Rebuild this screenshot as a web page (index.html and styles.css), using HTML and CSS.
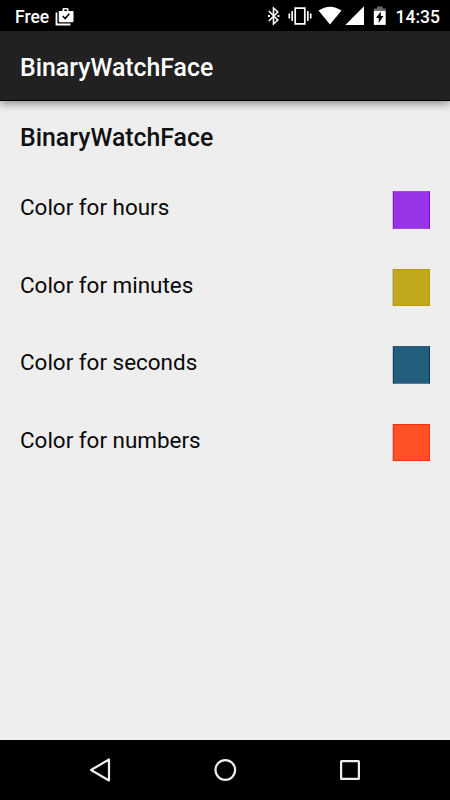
FILE: index.html
```html
<!DOCTYPE html>
<html lang="en">
<head>
<meta charset="utf-8">
<title>BinaryWatchFace</title>
<link rel="stylesheet" href="styles.css">
</head>
<body>
<div class="screen">
  <div class="status">
    <span class="carrier">Free</span>
    <svg class="work" width="20" height="20" viewBox="0 0 20 20"><path d="M1.5 5.500V17.500H15.500" fill="none" stroke="#fff" stroke-width="1.800"/><path fill="#fff" fill-rule="evenodd" d="M3.800 4H7.500V2.300Q7.500 1 8.800 1H12.200Q13.500 1 13.500 2.300V4H18.500V14Q18.500 15.300 17.200 15.300H5.100Q3.800 15.300 3.800 14ZM9.200 4H12V2.500H9.200Z"/><path d="M7.800 9L10.200 11.500L14.300 6.800" fill="none" stroke="#000" stroke-width="1.600"/></svg>
    <svg class="bluetooth" width="14" height="20" viewBox="0 0 14 20"><path d="M1.800 5L10.800 14L6.500 18V2L10.800 6L1.800 15" fill="none" stroke="#fff" stroke-width="1.600"/><path d="M1 9.100H2.900V10.900H1ZM10.500 9.100H12.400V10.900H10.500Z" fill="#fff"/></svg>
    <svg class="vibrate" width="24" height="20" viewBox="0 0 24 20"><path d="M7.200 2.200H16.800V17.800H7.200ZM4.200 5V15M1.300 7.500V12.500M19.800 5V15M22.700 7.500V12.500" fill="none" stroke="#fff" stroke-width="1.700"/></svg>
    <svg class="wifi" width="24" height="20" viewBox="0 0 24 20"><path d="M.5 4.500Q12-3.200 23.500 4.500L12 18.500Z" fill="#fff"/></svg>
    <svg class="signal" width="20" height="20" viewBox="0 0 20 20"><path d="M.3 19L19 .3V19Z" fill="#fff"/></svg>
    <svg class="battery" width="14" height="20" viewBox="0 0 14 20"><path d="M.8 5V2.500H4V.5H9.500V2.500H12.700V5Z" fill="#6a6a6a"/><path d="M.8 5H12.700V18.900H.8Z" fill="#fff"/><path d="M7.800 5.500V10H10.500L5.700 17V12H3Z" fill="#000"/></svg>
    <span class="clock">14:35</span>
  </div>
  <header class="appbar">BinaryWatchFace</header>
  <main class="content">
    <h1 class="category">BinaryWatchFace</h1>
    <div class="row"><span>Color for hours</span><i class="swatch hours"></i></div>
    <div class="row"><span>Color for minutes</span><i class="swatch minutes"></i></div>
    <div class="row"><span>Color for seconds</span><i class="swatch seconds"></i></div>
    <div class="row"><span>Color for numbers</span><i class="swatch numbers"></i></div>
  </main>
  <nav class="navbar">
    <svg width="125" height="60" viewBox="0 0 125 60"><path d="M53 30L71 19.500V40.500Z" fill="none" stroke="#eee" stroke-width="2.200" stroke-linejoin="round"/></svg>
    <svg width="125" height="60" viewBox="0 0 125 60"><circle cx="62.300" cy="30" r="9.800" fill="none" stroke="#eee" stroke-width="2.200"/></svg>
    <svg width="125" height="60" viewBox="0 0 125 60"><rect x="53.100" y="21.100" width="17.800" height="17.800" rx=".5" fill="none" stroke="#eee" stroke-width="2.200"/></svg>
  </nav>
</div>
</body>
</html>
```
FILE: styles.css
```css
* { box-sizing: border-box; }
body { margin: 0; font-family: Roboto, sans-serif; }
.screen { width: 450px; height: 800px; display: flex; flex-direction: column; background: #eee; overflow: hidden; }
.status { height: 31px; flex: none; display: flex; align-items: flex-start; padding: 6px 10px 0 15px; background: #000; color: #fff; font-size: 17.5px; font-weight: 500; line-height: 23px; }
.status svg { flex: none; }
.carrier { width: 40px; }
.work { margin-top: 1px; }
.bluetooth { margin-left: auto; }
.vibrate { margin-left: 7px; }
.wifi { margin-left: 6px; }
.signal { margin-left: 3px; }
.battery { margin-left: 8.5px; }
.clock { margin-left: 8.5px; }
.appbar { height: 70px; flex: none; padding: 0 20px; line-height: 74px; background: #212121; color: #fff; font-size: 24.850px; font-weight: 500; border-bottom: 1px solid #000; box-shadow: 0 3px 8px rgba(0, 0, 0, .4); z-index: 1; }
.content { flex: 1; }
.category { height: 70px; margin: 0; padding: 0 20px; color: #111; font-size: 24.850px; font-weight: 500; line-height: 74px; }
.row { height: 77.5px; padding: 0 20px; display: flex; align-items: center; justify-content: space-between; color: #080808; font-size: 22.450px; }
.row span { margin-top: -5px; }
.swatch { width: 37px; height: 37.500px; border: 1px solid; box-shadow: -1px 0 rgba(120, 100, 130, .3); }
.hours { background: #9933e8; border-color: #a04ae0 #8500dc #a04ae0 #8a12d8; }
.minutes { background: #c2a81d; border-color: #b89a0a; }
.seconds { background: #235e7c; border-color: #2c5c78 #003860 #557d94 #0d446c; }
.numbers { background: #ff5028; border-color: #ff2c08; }
.navbar { height: 60px; flex: none; display: flex; justify-content: center; background: #000; }
```
